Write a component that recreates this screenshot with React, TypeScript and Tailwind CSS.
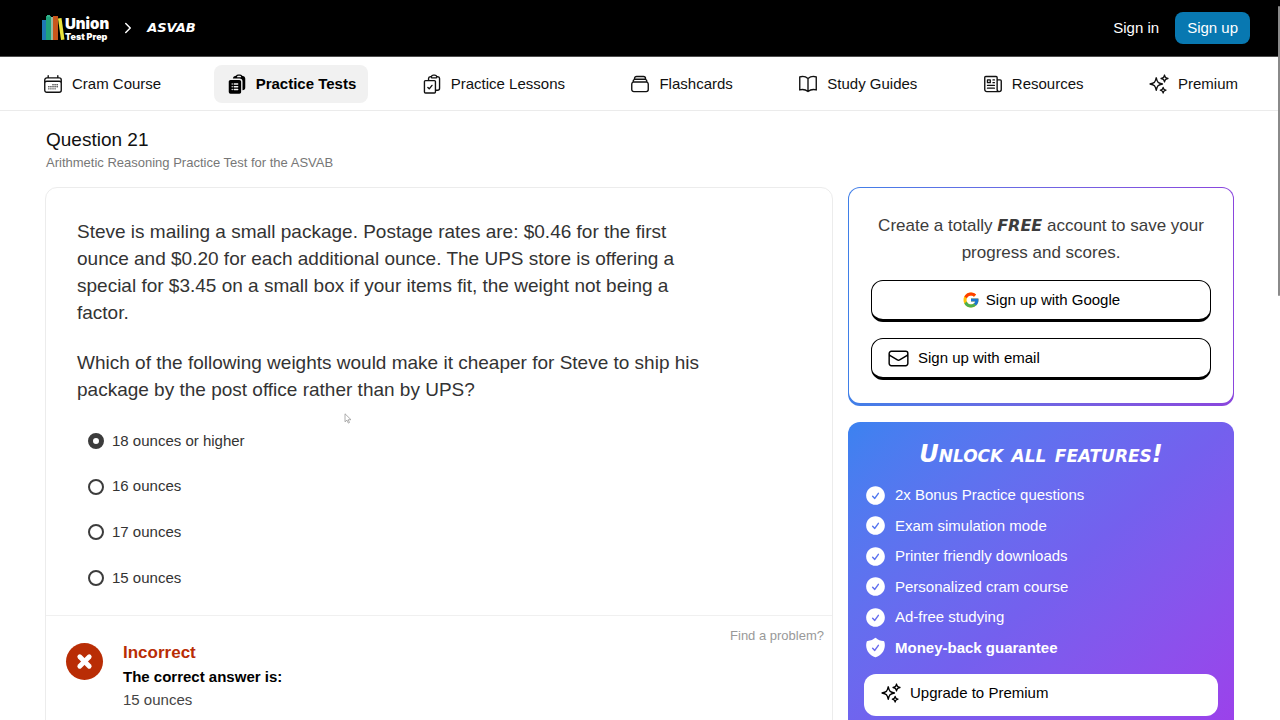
import { X, ChevronRight } from 'lucide-react';
import {
  HiOutlineCalendarDays,
  HiClipboardDocumentList,
  HiOutlineClipboardDocumentCheck,
  HiOutlineRectangleStack,
  HiOutlineBookOpen,
  HiOutlineNewspaper,
  HiOutlineSparkles,
  HiOutlineEnvelope,
  HiCheckCircle,
  HiShieldCheck,
} from 'react-icons/hi2';
import { FcGoogle } from 'react-icons/fc';

const navItems = [
  { label: 'Cram Course', Icon: HiOutlineCalendarDays },
  { label: 'Practice Tests', Icon: HiClipboardDocumentList, active: true },
  { label: 'Practice Lessons', Icon: HiOutlineClipboardDocumentCheck },
  { label: 'Flashcards', Icon: HiOutlineRectangleStack },
  { label: 'Study Guides', Icon: HiOutlineBookOpen },
  { label: 'Resources', Icon: HiOutlineNewspaper },
  { label: 'Premium', Icon: HiOutlineSparkles },
];

const options = ['18 ounces or higher', '16 ounces', '17 ounces', '15 ounces'];

const features = [
  { label: '2x Bonus Practice questions', Icon: HiCheckCircle },
  { label: 'Exam simulation mode', Icon: HiCheckCircle },
  { label: 'Printer friendly downloads', Icon: HiCheckCircle },
  { label: 'Personalized cram course', Icon: HiCheckCircle },
  { label: 'Ad-free studying', Icon: HiCheckCircle },
  { label: 'Money-back guarantee', Icon: HiShieldCheck, strong: true },
];

function Logo() {
  return (
    <a href="#" className="flex items-center text-white" aria-label="Union Test Prep">
      <svg width="23" height="28" viewBox="0 0 23 28" aria-hidden="true">
        <rect x="0" y="6" width="4" height="20" fill="#1f78b4" />
        <rect x="4" y="2" width="5" height="24" fill="#1fa37c" />
        <rect x="5" y="1" width="3" height="2" fill="#35b08b" />
        <rect x="9" y="3" width="2" height="23" fill="#9db8a0" />
        <rect x="11" y="2" width="5" height="24" fill="#c9561c" />
        <path d="M16 4.5 19.5 4 22.5 25.5 19 26z" fill="#e9e43c" />
      </svg>
      <span className="flex flex-col pt-0.5 font-['Inter',sans-serif] font-black">
        <span className="text-[15px] leading-[14px]">Union</span>
        <span className="text-[9px] leading-[11px]">Test Prep</span>
      </span>
    </a>
  );
}

function Header() {
  return (
    <header className="flex h-[57px] items-center justify-between border-b border-[#4d4d4d] bg-black pr-[30px] pl-[42px] text-white">
      <div className="flex items-center">
        <Logo />
        <ChevronRight className="mx-2.5" size={18} strokeWidth={2} />
        <a href="#" className="font-['DejaVu_Sans',sans-serif] text-[13px] font-bold italic">
          ASVAB
        </a>
      </div>
      <div className="flex items-center gap-4 text-[15px]">
        <a href="#">Sign in</a>
        <a href="#" className="rounded-lg bg-[#0878b1] px-3 py-[5px]">
          Sign up
        </a>
      </div>
    </header>
  );
}

function Nav() {
  return (
    <nav className="flex items-center justify-between border-b border-[#ebebeb] px-[30px] pt-2 pb-[7px] text-[15px] text-[#111]">
      {navItems.map(({ label, Icon, active }) => (
        <a
          key={label}
          href="#"
          className={
            active
              ? 'flex h-[38px] items-center gap-2 rounded-lg bg-[#f1f1f1] px-3 font-bold text-black'
              : 'flex h-[38px] items-center gap-2 px-3'
          }
        >
          <Icon size={22} />
          {label}
        </a>
      ))}
    </nav>
  );
}

function QuestionCard() {
  return (
    <section className="min-w-0 flex-1 rounded-xl border border-[#ececec]">
      <div className="px-[31px] pt-[30px] pb-[14px] text-[#333]">
        <div className="flex max-w-[640px] flex-col gap-[23px] text-[19px] leading-[27px]">
          <p>
            Steve is mailing a small package. Postage rates are: $0.46 for the first ounce and $0.20 for each
            additional ounce. The UPS store is offering a special for $3.45 on a small box if your items fit, the
            weight not being a factor.
          </p>
          <p>
            Which of the following weights would make it cheaper for Steve to ship his package by the post office
            rather than by UPS?
          </p>
        </div>
        <div className="mt-[15px] grid h-[183px] grid-rows-4 pl-[11px] text-[15px]">
          {options.map((option, i) => (
            <label key={option} className="flex items-center gap-2">
              <input
                type="radio"
                name="answer"
                defaultChecked={i === 0}
                className="size-4 appearance-none rounded-full border-2 border-[#3c3c3c] bg-white checked:border-[5px]"
              />
              {option}
            </label>
          ))}
        </div>
      </div>
      <div className="flex items-start border-t border-[#f0f0f0] pt-[27px] pr-2 pb-8 pl-5">
        <span className="flex size-[37px] items-center justify-center rounded-full bg-[#b92d05] text-white">
          <X size={19} strokeWidth={6} />
        </span>
        <div className="ml-5 flex-1">
          <h2 className="text-[17px] leading-[19px] font-bold text-[#b92d05]">Incorrect</h2>
          <p className="mt-[3px] text-[15px] leading-[23px] font-bold text-black">The correct answer is:</p>
          <p className="text-[15px] leading-[23px] text-[#444]">15 ounces</p>
        </div>
        <a href="#" className="-mt-[17px] text-[13px] text-[#999]">
          Find a problem?
        </a>
      </div>
    </section>
  );
}

function SignupCard() {
  return (
    <section className="rounded-xl bg-linear-to-r from-[#3f7fe8] to-[#8a45dd] p-px pb-[3px]">
      <div className="rounded-[11px] bg-white px-[22px] pt-6 pb-[23px]">
        <p className="text-center text-[17px] leading-[27px] text-[#3c3c3c]">
          Create a totally{' '}
          <span className="font-['DejaVu_Sans',sans-serif] text-[16px] font-bold italic">FREE</span> account to save
          your progress and scores.
        </p>
        <button
          type="button"
          className="mt-[14px] flex h-[42px] w-full items-center justify-center gap-1.5 rounded-xl border border-b-[3px] border-black text-[15px] text-black"
        >
          <FcGoogle size={18} />
          Sign up with Google
        </button>
        <button
          type="button"
          className="mt-4 flex h-[42px] w-full items-center gap-2 rounded-xl border border-b-[3px] border-black px-[15px] text-[15px] text-black"
        >
          <HiOutlineEnvelope size={23} />
          Sign up with email
        </button>
      </div>
    </section>
  );
}

function PremiumCard() {
  return (
    <section className="mt-4 rounded-xl bg-linear-to-br from-[#3b82f0] via-[#7460ee] to-[#a03bea] px-4 pt-[17px] pb-12 text-white">
      <h2 className="text-center font-['DejaVu_Sans',sans-serif] text-[24px] leading-[30px] font-bold italic [font-variant:small-caps]">
        Unlock all features!
      </h2>
      <ul className="mt-[11px] grid h-[183px] grid-rows-6 text-[15px]">
        {features.map(({ label, Icon, strong }) => (
          <li key={label} className={strong ? 'flex items-center gap-2 font-bold' : 'flex items-center gap-2'}>
            <Icon size={23} />
            {label}
          </li>
        ))}
      </ul>
      <button
        type="button"
        className="mt-[11px] flex h-[42px] w-full items-center gap-2 rounded-xl bg-white px-4 pb-1 text-[15px] text-black"
      >
        <HiOutlineSparkles size={22} />
        Upgrade to Premium
      </button>
    </section>
  );
}

export default function App() {
  return (
    <div className="relative h-screen overflow-hidden bg-white font-['Liberation_Sans',Arial,sans-serif]">
      <Header />
      <Nav />
      <main className="px-[46px] pt-[17px]">
        <h1 className="text-[19px] leading-6 text-[#111]">Question 21</h1>
        <p className="text-[13px] leading-[22px] text-[#777]">Arithmetic Reasoning Practice Test for the ASVAB</p>
        <div className="mt-[13px] -ml-px flex items-start gap-[15px]">
          <QuestionCard />
          <aside className="w-[386px] shrink-0">
            <SignupCard />
            <PremiumCard />
          </aside>
        </div>
      </main>
      <div className="absolute top-1.5 right-0 h-[290px] w-0.5 rounded-full bg-[#8a8a8a]" />
      <svg className="absolute top-[413px] left-[344px]" width="8" height="11" viewBox="0 0 8 11" aria-hidden="true">
        <path d="M1 .8v8l2-1.7 1.3 3 1.2-.6-1.3-2.8H7z" fill="#fff" stroke="#999" strokeWidth=".8" />
      </svg>
    </div>
  );
}
